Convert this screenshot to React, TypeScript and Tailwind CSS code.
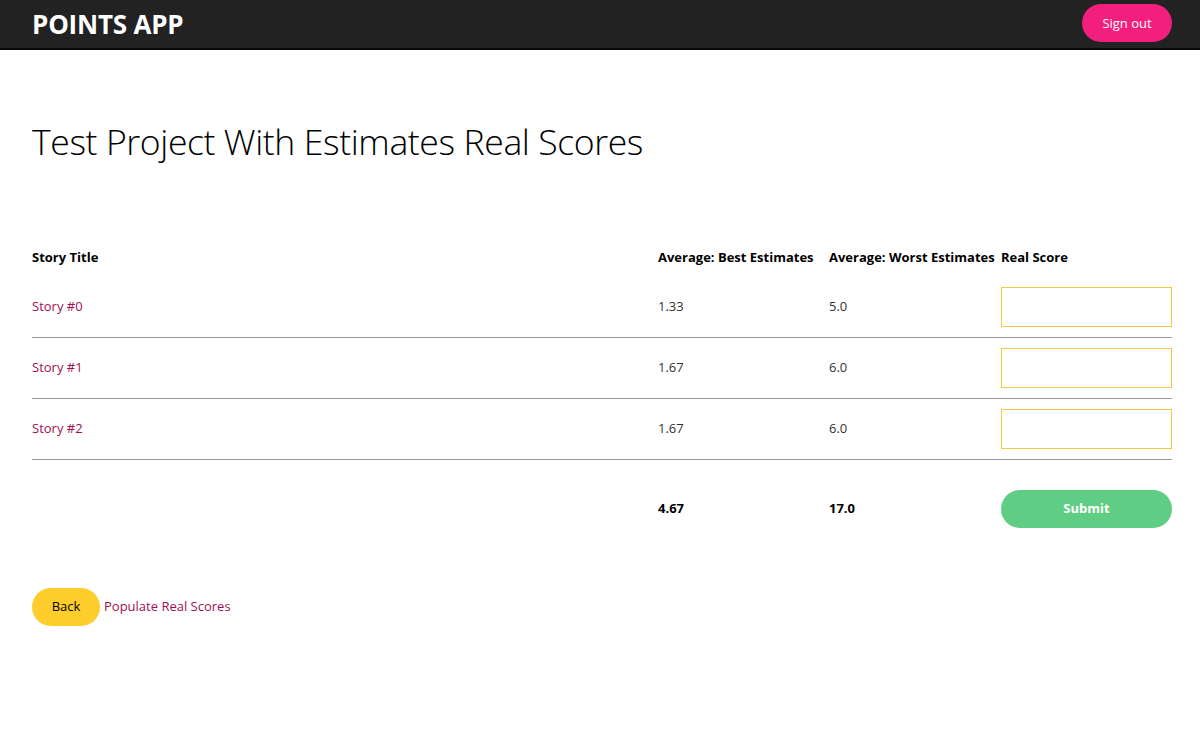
import React from "react";

const rows = [
  { title: "Story #0", best: "1.33", worst: "5.0" },
  { title: "Story #1", best: "1.67", worst: "6.0" },
  { title: "Story #2", best: "1.67", worst: "6.0" },
];

export default function App() {
  return (
    <div className="min-h-[740px] bg-white text-black" style={{ fontFamily: '"Open Sans", sans-serif' }}>
      <header className="h-[50px] bg-[#222222] border-b-2 border-[#0a0a0a] flex items-center justify-between pl-[32px] pr-[28px]">
        <div className="text-white font-bold text-[26px] leading-none tracking-[-0.2px]">POINTS APP</div>
        <button className="h-[38px] w-[90px] rounded-full bg-[#f21f7f] text-white text-[13px] -mt-[2px] pt-[1px]">Sign out</button>
      </header>
      <main className="pl-[32px] pr-[28px]">
        <h1 className="font-light text-[35.6px] leading-[48px] mt-[67px] tracking-[-0.4px]">Test Project With Estimates Real Scores</h1>
        <div className="mt-[72px] text-[13px]">
          <div className="grid grid-cols-[626px_171px_172px_171px] h-[40px] pt-[2px] items-center font-bold">
            <div>Story Title</div>
            <div>Average: Best Estimates</div>
            <div>Average: Worst Estimates</div>
            <div>Real Score</div>
          </div>
          {rows.map((r) => (
            <div key={r.title} className="grid grid-cols-[626px_171px_172px_171px] items-center py-[10px] border-b border-[#999999]">
              <div className="text-[#a0104f]">{r.title}</div>
              <div className="text-[#333333]">{r.best}</div>
              <div className="text-[#333333]">{r.worst}</div>
              <div>
                <input className="w-[171px] h-[40px] border border-[#f5c842] outline-none px-2" />
              </div>
            </div>
          ))}
          <div className="grid grid-cols-[626px_171px_172px_171px] items-center pt-[30px] pb-[10px] font-bold">
            <div></div>
            <div>4.67</div>
            <div>17.0</div>
            <div>
              <button className="w-[171px] h-[38px] rounded-full bg-[#5fce84] text-white font-bold text-[13px]">Submit</button>
            </div>
          </div>
        </div>
        <div className="mt-[50px] flex items-center gap-[4px] text-[13px]">
          <button className="h-[38px] w-[68px] rounded-full bg-[#fdcd2c] text-black">Back</button>
          <a className="text-[#a0104f]">Populate Real Scores</a>
        </div>
      </main>
    </div>
  );
}
